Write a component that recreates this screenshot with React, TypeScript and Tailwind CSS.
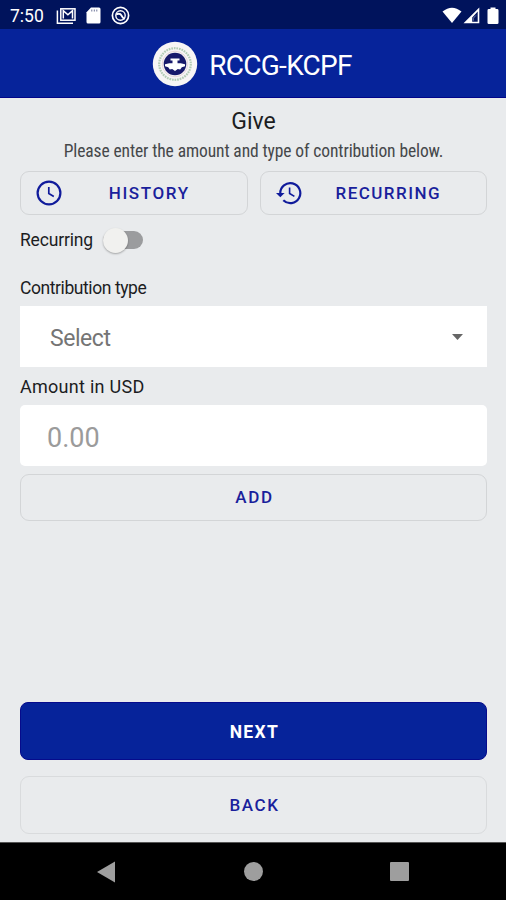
import React, { useState } from 'react';

const ChurchLogo = () => (
  <svg width="46" height="46" viewBox="0 0 46 46" className="shrink-0">
    <circle cx="23" cy="23" r="22.2" fill="#f7f5f5" />
    <circle cx="23" cy="23" r="15.8" fill="none" stroke="#86b08b" strokeWidth="2.2" strokeDasharray="1.7 0.9" opacity="0.6" />
    <circle cx="23" cy="23" r="12.8" fill="none" stroke="#e3cfd3" strokeWidth="0.8" />
    <circle cx="23" cy="23" r="11.3" fill="#17196b" />
    <path d="M18.5 17.5h9v2h-2v2.7h3.2l4.3 1v2l-3.200 1.100-1.600 2.200-2.400-.4L23 30l-2.800-1.900-2.400.4-1.600-2.200L13 25.200v-2l4.300-1h3.200v-2.700h-2z" fill="#fff" />
  </svg>
);

const ClockIcon = () => (
  <svg width="26" height="26" viewBox="0 0 26 26" fill="none" stroke="#101b9b" className="shrink-0">
    <circle cx="13" cy="13" r="11.4" strokeWidth="2.2" />
    <path d="M12.8 7v6.6l5 2.9" strokeWidth="1.7" />
  </svg>
);

const HistoryIcon = () => (
  <svg width="26" height="24" viewBox="0 0 26 24" fill="none" stroke="#101b9b" className="shrink-0">
    <path d="M4.3 12.500a10 10 0 1 1 3 6.800" strokeWidth="2.2" />
    <path d="M0 12h8.6l-4.3 4.3z" fill="#101b9b" stroke="none" />
    <path d="M13.6 6.5v6l4.8 2.9" strokeWidth="1.6" />
  </svg>
);

const StatusBar = () => (
  <div className="flex h-[29px] shrink-0 items-center bg-[#00135c] pt-0.5 pl-[10px] pr-[7px] text-white">
    <span className="w-[46px] pt-px text-[17.5px]">7:50</span>
    <svg width="20" height="18" viewBox="0 0 20 18" fill="none" stroke="#fff">
      <path d="M1.4 3.5v12.7h15.6" strokeWidth="1.5" />
      <rect x="4.8" y="1.8" width="14.200" height="11.4" strokeWidth="1.5" />
      <path d="M7.300 11.500V3.600l4.600 4.200 4.600-4.200v7.900" strokeWidth="1.5" />
    </svg>
    <svg width="15" height="17" viewBox="0 0 15 17" className="ml-[10px]">
      <path d="M5 .5h8A1.5 1.5 0 0 1 14.5 2v13a1.500 1.500 0 0 1-1.500 1.500H2A1.500 1.500 0 0 1 .5 15V5.200z" fill="#fff" />
      <path d="M5.8 2.5v2M8.3 2.5v2M10.8 2.5v2" stroke="#6d7599" strokeWidth="1" />
    </svg>
    <svg width="19" height="19" viewBox="0 0 19 19" fill="none" stroke="#fff" className="ml-[10px]">
      <circle cx="9.5" cy="9.5" r="8.1" strokeWidth="1.7" />
      <circle cx="9.5" cy="9.5" r="4.700" strokeWidth="1.4" />
      <path d="M5.200 8.300q4-1.400 5.200 1t3.200 4" strokeWidth="1.900" />
    </svg>
    <div className="ml-auto flex items-center">
      <svg width="20" height="17" viewBox="0 0 20 17">
        <path d="M.5 4.6Q10-3.2 19.5 4.6L10 16z" fill="#fff" />
      </svg>
      <svg width="17" height="17" viewBox="0 0 17 17" className="ml-px">
        <path d="M16.3.5v15.800H.5zM14.7 4.5l-5.500 6v4.200h5.500z" fill="#fff" fillRule="evenodd" />
        <path d="M10.3 13.7v-2.5l2.5-2.700" fill="none" stroke="#8b93b8" strokeWidth="0.8" />
      </svg>
      <svg width="12" height="18" viewBox="0 0 12 18" className="ml-[7px]">
        <path d="M3.5.5h5v1.600h1.700q1.300 0 1.300 1.300v12.300q0 1.300-1.300 1.300H1.800Q.5 17 .5 15.700V3.400Q.5 2.100 1.800 2.100h1.700z" fill="#fff" />
      </svg>
    </div>
  </div>
);

const NavigationBar = () => (
  <div className="flex h-[58px] shrink-0 items-center justify-between border-t border-[#555] bg-black px-[97px]">
    <svg width="18" height="22" viewBox="0 0 18 22">
      <path d="M0 11L18 .5v21z" fill="#9e9e9e" />
    </svg>
    <div className="ml-0.5 size-[19px] rounded-full bg-[#9e9e9e]" />
    <div className="size-[19px] rounded-[1px] bg-[#9e9e9e]" />
  </div>
);

const App: React.FC = () => {
  const [recurring, setRecurring] = useState(false);

  return (
    <div className="flex h-[900px] w-[506px] flex-col overflow-hidden bg-[#e9ebed] font-['Roboto',sans-serif] text-[#1c1d1f]">
      <StatusBar />

      <header className="flex h-[69px] shrink-0 items-center justify-center gap-[11px] border-b border-[#02058a] bg-[#06239a] pr-0.5 pt-px text-white">
        <ChurchLogo />
        <h1 className="pt-[5px] text-[28px] tracking-[-0.025em]">RCCG-KCPF</h1>
      </header>

      <main className="flex flex-1 flex-col pl-5 pr-[19px] pt-[10px]">
        <h2 className="text-center text-[23px] leading-[28px]">Give</h2>
        <p className="mt-[3px] text-center text-[17.5px] leading-[24px] tracking-[-0.006em] font-stretch-condensed text-[#45474a]">
          Please enter the amount and type of contribution below.
        </p>

        <div className="mt-[8px] grid grid-cols-2 gap-3">
          <button className="flex h-[44px] items-center rounded-[9px] border border-[#d3d5d7] pl-[15px] text-[#1a1f9c]">
            <ClockIcon />
            <span className="flex-1 pt-0.5 pr-[10px] text-center text-[17px] font-medium tracking-[0.095em]">HISTORY</span>
          </button>
          <button className="flex h-[44px] items-center rounded-[9px] border border-[#d3d5d7] pl-[15px] text-[#1a1f9c]">
            <HistoryIcon />
            <span className="flex-1 pt-0.5 pr-[11px] text-center text-[17px] font-medium tracking-[0.085em]">RECURRING</span>
          </button>
        </div>

        <div className="mt-[11px] flex h-[28px] items-center">
          <span className="w-[83px] text-[17.5px] tracking-[-0.01em]">Recurring</span>
          <button
            role="switch"
            aria-checked={recurring}
            onClick={() => setRecurring(!recurring)}
            className="relative flex h-[18px] w-[40px] items-center rounded-full bg-[#9b9c9e]"
          >
            <span className={`absolute size-[25px] rounded-full bg-[#f1f1ef] shadow-[0_1px_2px_rgba(0,0,0,0.3)] ${recurring ? 'right-0' : 'left-0'}`} />
          </button>
        </div>

        <label className="mt-[22px] text-[17.5px] leading-[24px] tracking-[-0.024em]">Contribution type</label>
        <button className="mt-[6px] flex h-[61px] items-center justify-between bg-white pl-[30px] pr-[24px] text-[23px] text-[#757575]">
          <span className="pt-[5px] tracking-[-0.02em]">Select</span>
          <svg width="11" height="6" viewBox="0 0 11 6">
            <path d="M0 0h11L5.5 6z" fill="#666" />
          </svg>
        </button>

        <label className="mt-[8px] text-[18px] leading-[24px] tracking-[0.015em]">Amount in USD</label>
        <input
          placeholder="0.00"
          className="mt-[6px] h-[61px] rounded-[5px] bg-white px-[27px] pt-[4px] text-[27px] placeholder-[#9b9b9b] outline-none"
        />
        <button className="mt-[8px] h-[47px] rounded-[9px] border border-[#d3d5d7] pl-0.5 pt-px text-[17px] font-medium tracking-[0.1em] text-[#1a1f9c]">
          ADD
        </button>

        <div className="mt-auto mb-[8px] flex flex-col gap-4">
          <button className="h-[58px] rounded-[8px] border border-[#060b8c] bg-[#06239a] pl-0.5 pt-0.5 text-[17.5px] font-bold tracking-[0.08em] text-white">
            NEXT
          </button>
          <button className="h-[58px] rounded-[9px] border border-[#d9dbdd] pl-0.5 pt-0.5 text-[17px] font-medium tracking-[0.09em] text-[#1a1f9c]">
            BACK
          </button>
        </div>
      </main>

      <NavigationBar />
    </div>
  );
};

export default App;
